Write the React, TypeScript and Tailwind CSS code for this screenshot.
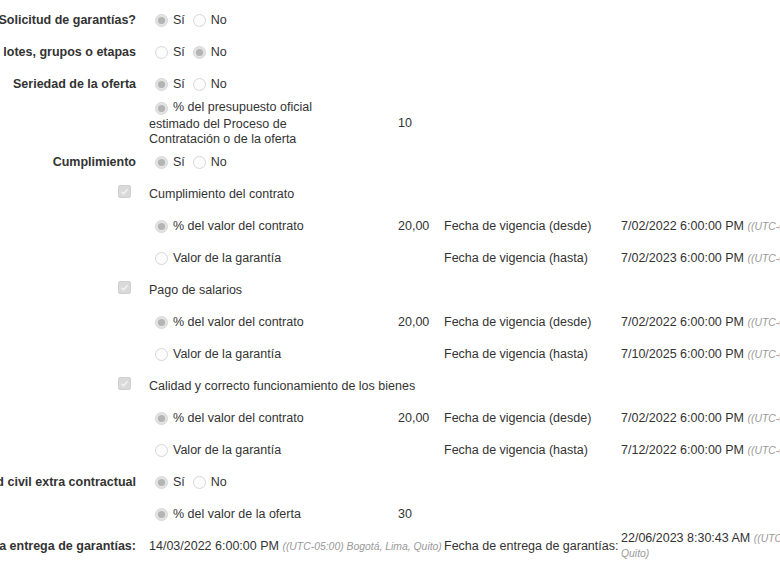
import React from "react";

type RadioProps = { checked?: boolean };

function Radio({ checked }: RadioProps) {
  return (
    <svg width="13" height="13" viewBox="0 0 13 13" className="inline-block shrink-0 align-[-2px]">
      <circle cx="6.5" cy="6.5" r="6" fill={checked ? "#e3e3e3" : "#fcfcfc"} stroke="#d6d6d6" strokeWidth="1" />
      {checked && <circle cx="6.5" cy="6.5" r="3.6" fill="#b4b4b4" />}
    </svg>
  );
}

function CheckBox() {
  return (
    <svg width="13" height="13" viewBox="0 0 13 13" className="block">
      <rect x="0.5" y="0.5" width="12" height="12" rx="1.5" fill="#d9d9d9" stroke="#d0d0d0" />
      <path d="M3.5 6.8 L5.6 8.8 L9.6 4.2" fill="none" stroke="#f2f2f2" strokeWidth="1.5" />
    </svg>
  );
}

function SiNo({ si }: { si: boolean }) {
  return (
    <div className="flex items-center pl-[6px]">
      <Radio checked={si} />
      <span className="ml-[5px]">Sí</span>
      <span className="ml-[8px] flex items-center">
        <Radio checked={!si} />
      </span>
      <span className="ml-[5px]">No</span>
    </div>
  );
}

function Opt({ checked, text }: { checked: boolean; text: string }) {
  return (
    <div className="flex items-center pl-[6px] whitespace-nowrap">
      <Radio checked={checked} />
      <span className="ml-[5px]">{text}</span>
    </div>
  );
}

function Zone() {
  return <span className="italic text-[10.4px] text-[#999]">((UTC-05:00) Bogotá, Lima, Quito)</span>;
}

type RowProps = {
  label?: string;
  check?: boolean;
  c2?: React.ReactNode;
  c3?: React.ReactNode;
  c4?: React.ReactNode;
  c5?: React.ReactNode;
  h?: string;
};

function Row({ label, check, c2, c3, c4, c5, h = "h-[32px]" }: RowProps) {
  return (
    <div className={`flex ${h}`}>
      {check ? (
        <div className="w-[149px] shrink-0 flex justify-end items-start pt-[7px] pr-[18px]">
          <CheckBox />
        </div>
      ) : (
        <div className="w-[149px] shrink-0 flex justify-end items-center pr-[13px] whitespace-nowrap font-bold">
          {label}
        </div>
      )}
      <div className="w-[249px] shrink-0 flex items-center">{c2}</div>
      <div className="w-[46px] shrink-0 flex items-center">{c3}</div>
      <div className="w-[177px] shrink-0 flex items-center whitespace-nowrap">{c4}</div>
      <div className="w-[320px] shrink-0 flex items-center whitespace-nowrap">{c5}</div>
    </div>
  );
}

export default function App() {
  const bloque = (titulo: string, desde: string, hasta: string) => (
    <>
      <Row check c2={<span className="whitespace-nowrap">{titulo}</span>} />
      <Row
        c2={<Opt checked text="% del valor del contrato" />}
        c3={<span>20,00</span>}
        c4={<span>Fecha de vigencia (desde)</span>}
        c5={
          <span>
            {desde} <Zone />
          </span>
        }
      />
      <Row
        c2={<Opt checked={false} text="Valor de la garantía" />}
        c4={<span>Fecha de vigencia (hasta)</span>}
        c5={
          <span>
            {hasta} <Zone />
          </span>
        }
      />
    </>
  );

  return (
    <div className="w-[780px] h-[565px] overflow-hidden bg-white text-[#333] text-[12.5px] leading-[15px] font-['Liberation_Sans',Arial,sans-serif]">
      <div className="pt-[4px]">
        <Row label="¿Solicitud de garantías?" c2={<SiNo si />} />
        <Row label="¿Garantías por lotes, grupos o etapas" c2={<SiNo si={false} />} />
        <Row label="Seriedad de la oferta" c2={<SiNo si />} />
        <Row
          h="h-[46px]"
          c2={
            <div className="w-[178px] self-start">
              <span className="ml-[6px] mr-[5px] inline-block align-[-2px]">
                <Radio checked />
              </span>
              % del presupuesto oficial estimado del Proceso de Contratación o de la oferta
            </div>
          }
          c3={<span>10</span>}
        />
        <Row label="Cumplimiento" c2={<SiNo si />} />
        {bloque("Cumplimiento del contrato", "7/02/2022 6:00:00 PM", "7/02/2023 6:00:00 PM")}
        {bloque("Pago de salarios", "7/02/2022 6:00:00 PM", "7/10/2025 6:00:00 PM")}
        {bloque("Calidad y correcto funcionamiento de los bienes", "7/02/2022 6:00:00 PM", "7/12/2022 6:00:00 PM")}
        <Row label="Responsabilidad civil extra contractual" c2={<SiNo si />} />
        <Row c2={<Opt checked text="% del valor de la oferta" />} c3={<span>30</span>} />
        <div className="flex h-[32px]">
          <div className="w-[149px] shrink-0 flex justify-end items-center pr-[13px] whitespace-nowrap font-bold">
            Fecha límite para la entrega de garantías:
          </div>
          <div className="w-[295px] shrink-0 flex items-center whitespace-nowrap">
            <span>
              14/03/2022 6:00:00 PM <Zone />
            </span>
          </div>
          <div className="w-[177px] shrink-0 flex items-center whitespace-nowrap">Fecha de entrega de garantías:</div>
          <div className="w-[280px] shrink-0 flex items-center leading-[14px]">
            <span>
              22/06/2023 8:30:43 AM <Zone />
            </span>
          </div>
        </div>
      </div>
    </div>
  );
}
